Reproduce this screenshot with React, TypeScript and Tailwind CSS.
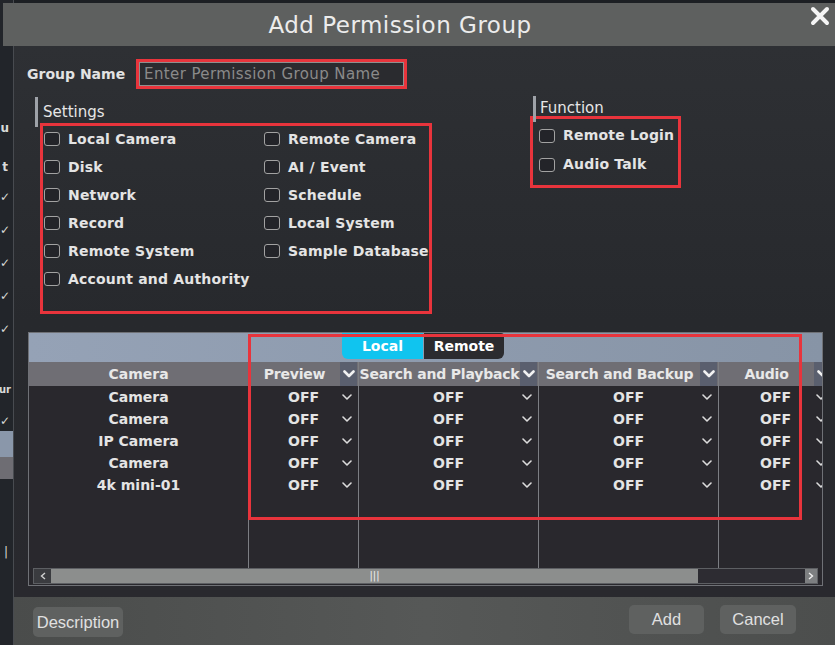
import React from "react";

const settingsLeft = [
  "Local Camera",
  "Disk",
  "Network",
  "Record",
  "Remote System",
  "Account and Authority",
];

const settingsRight = [
  "Remote Camera",
  "AI / Event",
  "Schedule",
  "Local System",
  "Sample Database",
];

const cameras = ["Camera", "Camera", "IP Camera", "Camera", "4k mini-01"];

const columns = [
  { title: "Preview", width: "w-[110px]" },
  { title: "Search and Playback", width: "w-[180px]" },
  { title: "Search and Backup", width: "w-[180px]" },
  { title: "Audio", width: "w-[114px]" },
];

function Box() {
  return (
    <span className="h-[14px] w-[16px] shrink-0 rounded-[3px] border-[1.5px] border-[#a2a2a2] bg-[#232429]" />
  );
}

function Check({ label, tall }: { label: string; tall?: boolean }) {
  return (
    <div
      className={`flex items-center gap-[8px] ${tall ? "h-[29px]" : "h-[28px]"}`}
    >
      <Box />
      <span className="whitespace-nowrap text-[14px] font-bold tracking-[0.2px] text-[#e4e4e4]">
        {label}
      </span>
    </div>
  );
}

function SmallChevron() {
  return (
    <svg width="10" height="6" viewBox="0 0 10 6">
      <polyline
        points="1,1 5,5 9,1"
        fill="none"
        stroke="#dcdcdc"
        strokeWidth="1.6"
        strokeLinecap="round"
        strokeLinejoin="round"
      />
    </svg>
  );
}

function HeadChevron() {
  return (
    <svg width="12" height="8" viewBox="0 0 12 8">
      <polyline
        points="1.5,1.5 6,6 10.5,1.5"
        fill="none"
        stroke="#f2f2f2"
        strokeWidth="2.6"
        strokeLinecap="round"
        strokeLinejoin="round"
      />
    </svg>
  );
}

// the app behind the dialog, only a sliver of it shows on the left
function BackgroundStrip() {
  const line = "flex justify-end whitespace-nowrap";
  return (
    <div className="flex h-full w-[14px] flex-col border-r border-[#484b50] bg-[#22252a] pt-[46px] text-[12px] font-bold text-[#d9d9d9]">
      <div className="h-[72px]" />
      <div className={`${line} h-[20px] items-center pr-[4px]`}>u</div>
      <div className="h-[19px]" />
      <div className={`${line} h-[20px] items-center pr-[5px]`}>t</div>
      <div className="h-[3px]" />
      {[0, 1, 2, 3, 4].map((i) => (
        <div key={i} className={`${line} h-[33px] items-center pr-[3px] font-normal`}>
          ✓
        </div>
      ))}
      <div className="h-[34px]" />
      <div className={`${line} h-[20px] items-center pr-[2px] text-[10px]`}>ur</div>
      <div className="h-[12px]" />
      <div className={`${line} h-[20px] items-center pr-[3px] font-normal`}>✓</div>
      <div className="h-[26px] bg-[#8a97aa]" />
      <div className="h-[22px] bg-[#6e6d73]" />
      <div className="h-[63px]" />
      <div className={`${line} h-[20px] items-center pr-[5px] font-normal`}>|</div>
    </div>
  );
}

export default function App() {
  return (
    <div className="relative h-[645px] w-[835px] overflow-hidden bg-[#1c1f23] font-['DejaVu_Sans',sans-serif]">
      <BackgroundStrip />

      <div className="absolute left-[14px] top-[3px] flex h-[642px] w-[821px] flex-col">
        {/* title bar */}
        <div className="relative -ml-[11px] flex h-[43px] w-[832px] shrink-0 items-center justify-center bg-[#5e605f] pr-[38px] pt-[1px]">
          <span className="text-[23px] tracking-[0.5px] text-[#ececec]">
            Add Permission Group
          </span>
          <svg
            className="absolute right-[4px] top-[2px]"
            width="22"
            height="22"
            viewBox="0 0 22 22"
          >
            <path
              d="M4 4 L18 18 M18 4 L4 18"
              stroke="#f5f5f5"
              strokeWidth="4"
              strokeLinecap="round"
            />
          </svg>
        </div>

        {/* body */}
        <div className="flex flex-1 flex-col bg-gradient-to-b from-[#2e3034] via-[#27292d] to-[#29292e] pl-[13px]">
          <div className="mt-[13px] flex h-[30px] items-center">
            <span className="w-[109px] text-[14px] font-bold text-[#e2e2e2]">
              Group Name
            </span>
            <div className="h-[30px] w-[271px] border-[3px] border-[#e8343c]">
              <div className="flex h-full items-center border border-[#8f8f8f] bg-[#2a2b2f] pl-[4px] text-[15px] tracking-[0.4px] text-[#8a8a8a]">
                Enter Permission Group Name
              </div>
            </div>
          </div>

          <div className="mt-[7px] flex">
            <div className="ml-[8px] w-[495px] shrink-0">
              <div className="flex h-[27px] items-start">
                <span className="mt-[1px] h-[30px] w-[3px] bg-[#9ea2a8]" />
                <span className="ml-[5px] mt-[6px] text-[15px] leading-[20px] text-[#e6e6e6]">
                  Settings
                </span>
              </div>
              <div className="ml-[5px] flex h-[191px] w-[392px] border-[3px] border-[#e8343c] pl-[1px]">
                <div className="-mt-px flex w-[220px] flex-col">
                  {settingsLeft.map((s) => (
                    <Check key={s} label={s} />
                  ))}
                </div>
                <div className="-mt-px flex flex-col">
                  {settingsRight.map((s) => (
                    <Check key={s} label={s} />
                  ))}
                </div>
              </div>
            </div>

            <div>
              <div className="flex h-[20px] items-start">
                <span className="ml-[3px] h-[26px] w-[3px] bg-[#9ea2a8]" />
                <span className="ml-[4px] mt-[2px] text-[15px] leading-[20px] text-[#e6e6e6]">
                  Function
                </span>
              </div>
              <div className="h-[72px] w-[151px] border-[3px] border-[#e8343c] pl-[6px] pt-[2px]">
                <Check label="Remote Login" tall />
                <Check label="Audio Talk" tall />
              </div>
            </div>
          </div>

          {/* permission table */}
          <div className="relative ml-[1px] mt-[18px] flex h-[254px] w-[795px] flex-col border border-[#6f7176] bg-[#29282d]">
            <div className="flex h-[29px] shrink-0 bg-gradient-to-r from-[#95a2b6] to-[#8794a6] pl-[313px]">
              <div className="flex h-[26px] w-[81px] items-center justify-center rounded-bl-[6px] bg-[#10c4ef] text-[14px] font-bold text-white">
                Local
              </div>
              <div className="ml-px flex h-[26px] w-[80px] items-center justify-center rounded-br-[6px] rounded-tr-[3px] bg-[#2b2b2f] text-[14px] font-bold text-white">
                Remote
              </div>
            </div>

            <div className="flex flex-1 overflow-hidden">
              <div className="flex w-[219px] shrink-0 flex-col">
                <div className="flex h-[24px] items-center justify-center bg-[#6f6e74] text-[14px] font-bold text-[#e8e8e8]">
                  Camera
                </div>
                {cameras.map((c, i) => (
                  <div
                    key={i}
                    className="flex h-[22px] items-center justify-center text-[14px] font-bold text-[#e4e4e4]"
                  >
                    {c}
                  </div>
                ))}
              </div>

              {columns.map((col) => (
                <div
                  key={col.title}
                  className={`flex shrink-0 flex-col border-l border-[#7c7e83] ${col.width}`}
                >
                  <div className="flex h-[24px] shrink-0 items-center bg-[#6f6e74]">
                    <span className="flex-1 overflow-hidden whitespace-nowrap text-center text-[14px] font-bold tracking-[-0.2px] text-[#e8e8e8]">
                      {col.title}
                    </span>
                    <span className="mr-px flex h-full w-[17px] items-center justify-center bg-[#5a5f6e]">
                      <HeadChevron />
                    </span>
                  </div>
                  {cameras.map((_, i) => (
                    <div key={i} className="flex h-[22px] items-center">
                      <span className="w-[22px]" />
                      <span className="flex-1 text-center text-[14px] font-bold text-[#e4e4e4]">
                        OFF
                      </span>
                      <span className="flex w-[22px] justify-center">
                        <SmallChevron />
                      </span>
                    </div>
                  ))}
                </div>
              ))}
            </div>

            <div className="mx-[4px] mb-px flex h-[16px] shrink-0 border border-[#5d5f63]">
              <div className="flex w-[17px] items-center justify-center bg-[#3a3b3f]">
                <svg width="6" height="8" viewBox="0 0 6 8">
                  <polyline points="5,1 1.5,4 5,7" fill="none" stroke="#d0d0d0" strokeWidth="1.4" />
                </svg>
              </div>
              <div className="flex w-[647px] items-center justify-center bg-[#8c8e8d] text-[10px] leading-none text-[#f0f0f0]">
                |||
              </div>
              <div className="flex-1 bg-[#2d2c32]" />
              <div className="flex w-[12px] items-center justify-center bg-[#7d7f81]">
                <svg width="6" height="8" viewBox="0 0 6 8">
                  <polyline points="1,1 4.5,4 1,7" fill="none" stroke="#f0f0f0" strokeWidth="1.4" />
                </svg>
              </div>
            </div>

            <div className="pointer-events-none absolute left-[219px] top-px h-[186px] w-[554px] border-[3px] border-[#e8343c]" />
          </div>
        </div>

        {/* footer */}
        <div className="flex h-[48px] shrink-0 bg-gradient-to-r from-[#4a4c4b] via-[#565857] to-[#4c4e4d] pl-[19px] pr-[39px] font-['Liberation_Sans',sans-serif]">
          <button className="mt-[10px] h-[30px] w-[90px] rounded-[5px] bg-[#5f6160] text-[16.5px] text-[#e0e0e0]">
            Description
          </button>
          <div className="flex-1" />
          <button className="mt-[8px] h-[29px] w-[75px] rounded-[5px] bg-[#5f6160] text-[16.5px] text-[#e0e0e0]">
            Add
          </button>
          <button className="ml-[16px] mt-[8px] h-[29px] w-[76px] rounded-[5px] bg-[#5f6160] text-[16.5px] text-[#e0e0e0]">
            Cancel
          </button>
        </div>
      </div>
    </div>
  );
}
